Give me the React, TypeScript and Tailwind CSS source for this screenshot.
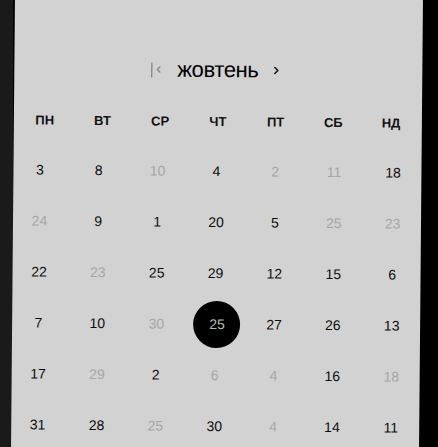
import { ChevronRight } from 'lucide-react';

type Day = { n: number; muted?: boolean; selected?: boolean };

const WEEKDAYS = ['ПН', 'ВТ', 'СР', 'ЧТ', 'ПТ', 'СБ', 'НД'];

const ROWS: Day[][] = [
  [{ n: 3 }, { n: 8 }, { n: 10, muted: true }, { n: 4 }, { n: 2, muted: true }, { n: 11, muted: true }, { n: 18 }],
  [{ n: 24, muted: true }, { n: 9 }, { n: 1 }, { n: 20 }, { n: 5 }, { n: 25, muted: true }, { n: 23, muted: true }],
  [{ n: 22 }, { n: 23, muted: true }, { n: 25 }, { n: 29 }, { n: 12 }, { n: 15 }, { n: 6 }],
  [{ n: 7 }, { n: 10 }, { n: 30, muted: true }, { n: 25, selected: true }, { n: 27 }, { n: 26 }, { n: 13 }],
  [{ n: 17 }, { n: 29, muted: true }, { n: 2 }, { n: 6, muted: true }, { n: 4, muted: true }, { n: 16 }, { n: 18, muted: true }],
  [{ n: 31 }, { n: 28 }, { n: 25, muted: true }, { n: 30 }, { n: 4, muted: true }, { n: 14 }, { n: 11 }],
];

function DayCell({ day }: { day: Day }) {
  if (day.selected) {
    return (
      <div className="flex items-center justify-center">
        <div className="w-[47px] h-[47px] ml-[4px] rounded-full bg-black flex items-center justify-center text-[#b8b8b8]">
          {day.n}
        </div>
      </div>
    );
  }
  return (
    <div className={`flex items-center justify-center ${day.muted ? 'text-[#a6a6a6]' : 'text-[#0d0d0d]'}`}>
      {day.n}
    </div>
  );
}

export default function App() {
  return (
    <div
      className="w-[438px] h-[447px] overflow-hidden bg-black flex"
      style={{ fontFamily: '"Liberation Sans", Arial, sans-serif' }}
    >
      <div className="w-[13px] shrink-0 bg-[#1a1a1a]" />
      <div className="w-[408px] shrink-0 h-[470px] -mt-[12px] bg-[#d2d2d2] rotate-[0.5deg] flex flex-col pt-[70px]">
        <div className="h-[24px] flex items-center justify-center -ml-[3px]">
          <div className="flex items-center">
            <span className="w-px h-[15px] bg-[#6e6e6e]" />
            <svg width="7" height="8" viewBox="0 0 7 8" className="ml-[3px]" fill="none">
              <path d="M5 1 L2 4 L5 7" stroke="#8a8a8a" strokeWidth="1.4" />
            </svg>
          </div>
          <span className="mx-[15px] text-[22px] leading-none text-black tracking-[-0.4px]">жовтень</span>
          <ChevronRight size={12} strokeWidth={3} className="text-[#111] -ml-[3px]" />
        </div>

        <div className="mt-[30px] h-[20px] grid grid-cols-7 px-[2px]">
          {WEEKDAYS.map((d) => (
            <div key={d} className="flex items-center justify-center text-[13px] font-bold text-[#111]">
              {d}
            </div>
          ))}
        </div>

        <div className="mt-[14px] w-[412px] -ml-[3px] flex flex-col text-[14px]">
          {ROWS.map((row, i) => (
            <div key={i} className="h-[51px] grid grid-cols-7">
              {row.map((day, j) => (
                <DayCell key={j} day={day} />
              ))}
            </div>
          ))}
        </div>
      </div>
    </div>
  );
}
